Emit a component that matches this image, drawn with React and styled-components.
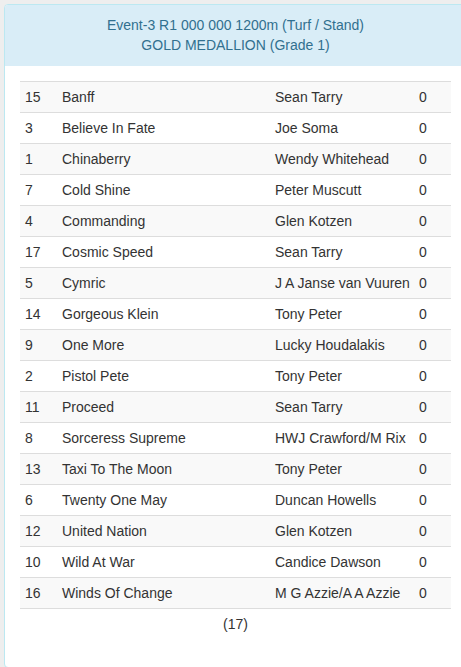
import React from 'react'
import styled, {createGlobalStyle} from 'styled-components'

const GlobalStyle = createGlobalStyle`
  html, body {
    margin: 0;
    padding: 0;
    background-color: #eeeeee;
    overflow: hidden;
  }
  body {
    font-family: 'Liberation Sans', Arial, sans-serif;
    font-size: 14px;
    line-height: 20px;
    color: #333333;
  }
`
const Page = styled.div`
  padding: 4px 0 0 4px;
  height: 667px;
  box-sizing: border-box;
  overflow: hidden;
`
const Panel = styled.div`
  width: 463px;
  height: 664px;
  box-sizing: border-box;
  background-color: #ffffff;
  border: 1px solid #bce8f1;
  border-radius: 4px;
`
const Heading = styled.div`
  padding: 10px 15px 11px;
  background-color: #d9edf7;
  color: #31708f;
  text-align: center;
  border-top-left-radius: 3px;
  border-top-right-radius: 3px;
`
const Body = styled.div`
  padding: 15px;
`
const Table = styled.table`
  width: 431px;
  border-collapse: collapse;
  border-spacing: 0;
  table-layout: fixed;
`
const Row = styled.tr`
  background-color: ${(props) => props.striped ? '#f9f9f9' : 'transparent'};
`
const Cell = styled.td`
  padding: 5px;
  border-top: 1px solid #dddddd;
  white-space: nowrap;
  overflow: hidden;
  text-align: ${(props) => props.center ? 'center' : 'left'};
`

const runners = [
  ['15', 'Banff', 'Sean Tarry'],
  ['3', 'Believe In Fate', 'Joe Soma'],
  ['1', 'Chinaberry', 'Wendy Whitehead'],
  ['7', 'Cold Shine', 'Peter Muscutt'],
  ['4', 'Commanding', 'Glen Kotzen'],
  ['17', 'Cosmic Speed', 'Sean Tarry'],
  ['5', 'Cymric', 'J A Janse van Vuuren'],
  ['14', 'Gorgeous Klein', 'Tony Peter'],
  ['9', 'One More', 'Lucky Houdalakis'],
  ['2', 'Pistol Pete', 'Tony Peter'],
  ['11', 'Proceed', 'Sean Tarry'],
  ['8', 'Sorceress Supreme', 'HWJ Crawford/M Rix'],
  ['13', 'Taxi To The Moon', 'Tony Peter'],
  ['6', 'Twenty One May', 'Duncan Howells'],
  ['12', 'United Nation', 'Glen Kotzen'],
  ['10', 'Wild At War', 'Candice Dawson'],
  ['16', 'Winds Of Change', 'M G Azzie/A A Azzie'],
]

export default function App() {
  return (
    <Page>
      <GlobalStyle />
      <Panel>
        <Heading>
          <div>Event-3 R1 000 000 1200m (Turf / Stand)</div>
          <div>GOLD MEDALLION (Grade 1)</div>
        </Heading>
        <Body>
          <Table>
            <colgroup>
              <col style={{width: 37}} />
              <col style={{width: 213}} />
              <col style={{width: 144}} />
              <col style={{width: 37}} />
            </colgroup>
            <tbody>
              {runners.map((r, i) => (
                <Row key={r[0]} striped={i % 2 === 0}>
                  <Cell>{r[0]}</Cell>
                  <Cell>{r[1]}</Cell>
                  <Cell>{r[2]}</Cell>
                  <Cell>0</Cell>
                </Row>
              ))}
            </tbody>
            <tfoot>
              <Row>
                <Cell colSpan={4} center>(17)</Cell>
              </Row>
            </tfoot>
          </Table>
        </Body>
      </Panel>
    </Page>
  )
}
